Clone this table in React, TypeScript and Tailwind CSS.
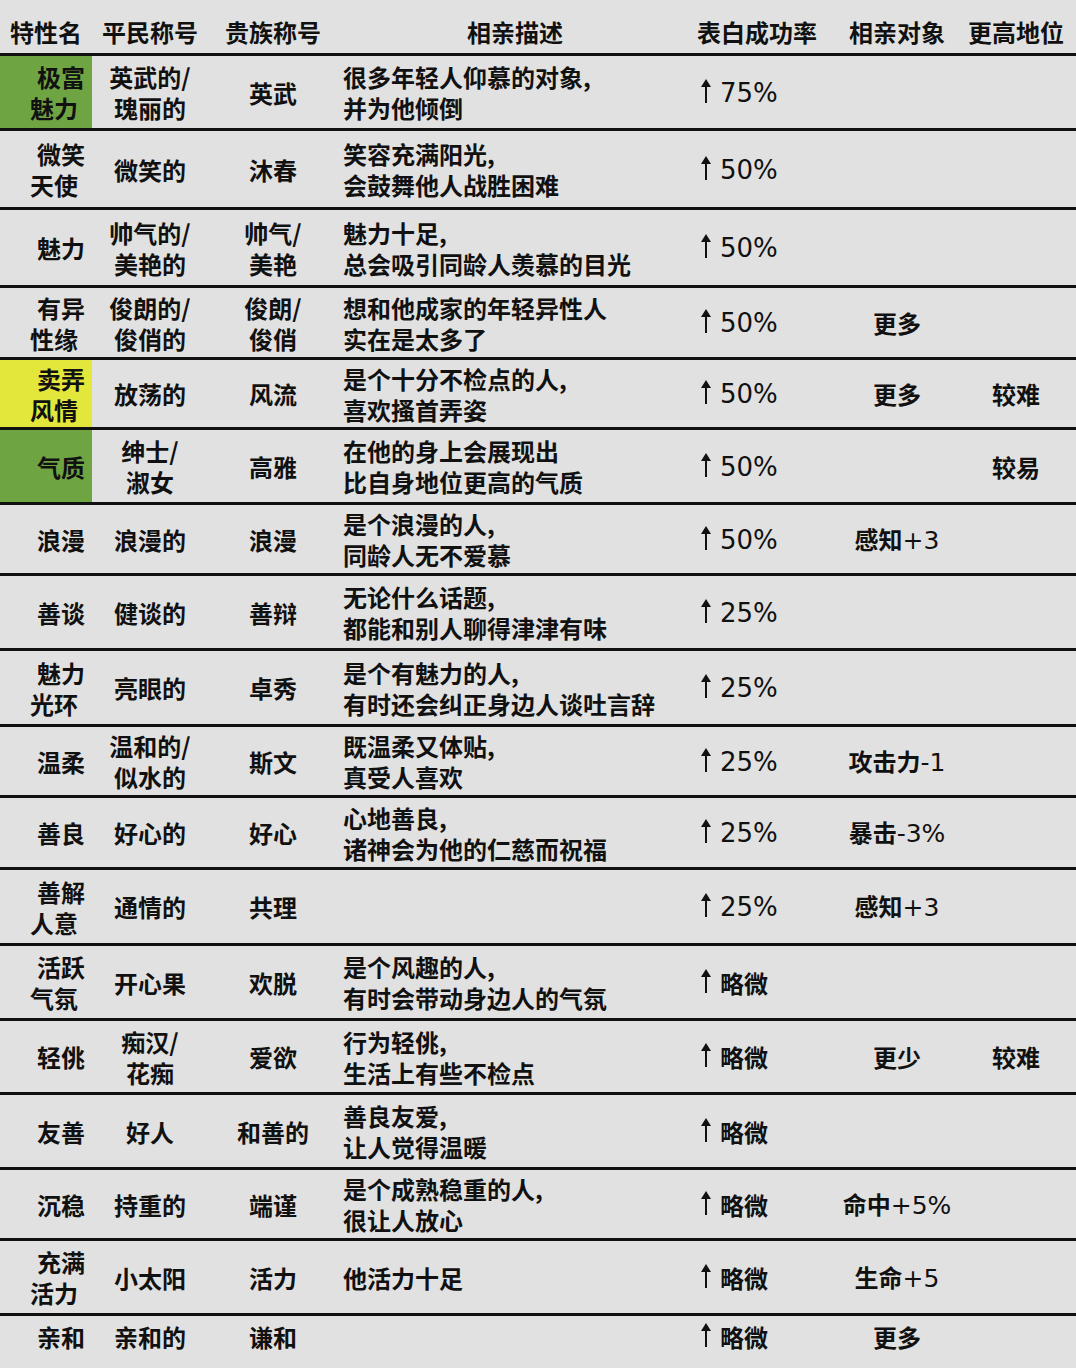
type Row = {
  name: string[];
  bg?: string;
  civ: string[];
  noble: string[];
  desc: string[];
  rate: string;
  target?: string;
  status?: string;
  h: string;
};

const rows: Row[] = [
  { name: ["极富", "魅力"], bg: "bg-[#6fa443]", civ: ["英武的/", "瑰丽的"], noble: ["英武"], desc: ["很多年轻人仰慕的对象,", "并为他倾倒"], rate: "75%", h: "h-[75px]" },
  { name: ["微笑", "天使"], civ: ["微笑的"], noble: ["沐春"], desc: ["笑容充满阳光,", "会鼓舞他人战胜困难"], rate: "50%", h: "h-[79px]" },
  { name: ["魅力"], civ: ["帅气的/", "美艳的"], noble: ["帅气/", "美艳"], desc: ["魅力十足,", "总会吸引同龄人羡慕的目光"], rate: "50%", h: "h-[78px]" },
  { name: ["有异", "性缘"], civ: ["俊朗的/", "俊俏的"], noble: ["俊朗/", "俊俏"], desc: ["想和他成家的年轻异性人", "实在是太多了"], rate: "50%", target: "更多", h: "h-[72px]" },
  { name: ["卖弄", "风情"], bg: "bg-[#e3e63b]", civ: ["放荡的"], noble: ["风流"], desc: ["是个十分不检点的人,", "喜欢搔首弄姿"], rate: "50%", target: "更多", status: "较难", h: "h-[70px]" },
  { name: ["气质"], bg: "bg-[#6fa443]", civ: ["绅士/", "淑女"], noble: ["高雅"], desc: ["在他的身上会展现出", "比自身地位更高的气质"], rate: "50%", status: "较易", h: "h-[75px]" },
  { name: ["浪漫"], civ: ["浪漫的"], noble: ["浪漫"], desc: ["是个浪漫的人,", "同龄人无不爱慕"], rate: "50%", target: "感知+3", h: "h-[71px]" },
  { name: ["善谈"], civ: ["健谈的"], noble: ["善辩"], desc: ["无论什么话题,", "都能和别人聊得津津有味"], rate: "25%", h: "h-[75px]" },
  { name: ["魅力", "光环"], civ: ["亮眼的"], noble: ["卓秀"], desc: ["是个有魅力的人,", "有时还会纠正身边人谈吐言辞"], rate: "25%", h: "h-[76px]" },
  { name: ["温柔"], civ: ["温和的/", "似水的"], noble: ["斯文"], desc: ["既温柔又体贴,", "真受人喜欢"], rate: "25%", target: "攻击力-1", h: "h-[71px]" },
  { name: ["善良"], civ: ["好心的"], noble: ["好心"], desc: ["心地善良,", "诸神会为他的仁慈而祝福"], rate: "25%", target: "暴击-3%", h: "h-[72px]" },
  { name: ["善解", "人意"], civ: ["通情的"], noble: ["共理"], desc: [], rate: "25%", target: "感知+3", h: "h-[76px]" },
  { name: ["活跃", "气氛"], civ: ["开心果"], noble: ["欢脱"], desc: ["是个风趣的人,", "有时会带动身边人的气氛"], rate: "略微", h: "h-[75px]" },
  { name: ["轻佻"], civ: ["痴汉/", "花痴"], noble: ["爱欲"], desc: ["行为轻佻,", "生活上有些不检点"], rate: "略微", target: "更少", status: "较难", h: "h-[74px]" },
  { name: ["友善"], civ: ["好人"], noble: ["和善的"], desc: ["善良友爱,", "让人觉得温暖"], rate: "略微", h: "h-[75px]" },
  { name: ["沉稳"], civ: ["持重的"], noble: ["端谨"], desc: ["是个成熟稳重的人,", "很让人放心"], rate: "略微", target: "命中+5%", h: "h-[71px]" },
  { name: ["充满", "活力"], civ: ["小太阳"], noble: ["活力"], desc: ["他活力十足"], rate: "略微", target: "生命+5", h: "h-[75px]" },
  { name: ["亲和"], civ: ["亲和的"], noble: ["谦和"], desc: [], rate: "略微", target: "更多", h: "h-[55px] pb-[12px]" },
];

const grid = "grid grid-cols-[92px_116px_130px_354px_130px_150px_88px]";
const latin = "font-['DejaVu_Sans',sans-serif] font-normal";

// digits and signs are set in a lighter, wider face than the CJK text
function Mixed({ text, size }: { text: string; size: string }) {
  const parts = text.split(/([0-9+\-%]+)/).filter(Boolean);
  return (
    <span className="whitespace-nowrap">
      {parts.map((p, i) =>
        /^[0-9+\-%]+$/.test(p) ? (
          <span key={i} className={`${latin} ${size}`}>
            {p}
          </span>
        ) : (
          <span key={i}>{p}</span>
        )
      )}
    </span>
  );
}

function UpArrow() {
  return (
    <svg width="12" height="24" viewBox="0 0 12 24" className="mr-[8px] mb-[3px] shrink-0" aria-hidden>
      <path d="M6 0 L11 8 L1 8 Z" fill="#111" />
      <rect x="5" y="6" width="2" height="18" fill="#111" />
    </svg>
  );
}

function Rate({ value }: { value: string }) {
  return (
    <span className="flex items-center whitespace-nowrap">
      <UpArrow />
      <Mixed text={value} size="text-[26px]" />
    </span>
  );
}

function Lines({ lines }: { lines: string[] }) {
  return (
    <div className="flex flex-col items-center">
      {lines.map((t) => (
        <div key={t} className="whitespace-nowrap">
          {t}
        </div>
      ))}
    </div>
  );
}

export default function App() {
  return (
    <div className="w-[1076px] h-[1368px] overflow-hidden bg-[#e1e1e1] text-[#111] font-['Noto_Sans_CJK_SC',sans-serif] font-bold text-[24px] leading-[31px]">
      <div className={`${grid} h-[53px] pt-[10px] items-center`}>
        <div className="flex justify-center">特性名</div>
        <div className="flex justify-center whitespace-nowrap">平民称号</div>
        <div className="flex justify-center whitespace-nowrap">贵族称号</div>
        <div className="flex justify-center">相亲描述</div>
        <div className="flex justify-center whitespace-nowrap">表白成功率</div>
        <div className="flex justify-center">相亲对象</div>
        <div className="flex justify-center whitespace-nowrap">更高地位</div>
      </div>

      {rows.map((r, idx) => (
        <div key={idx} className={`${grid} ${r.h} border-t-[3px] border-[#111]`}>
          <div className={`flex flex-col justify-center ${r.bg ?? ""}`}>
            {r.name.map((t, i) => (
              <div key={t} className={i === 0 ? "pl-[37px]" : "pl-[30px]"}>
                {t}
              </div>
            ))}
          </div>
          <div className="flex items-center justify-center">
            <Lines lines={r.civ} />
          </div>
          <div className="flex items-center justify-center">
            <Lines lines={r.noble} />
          </div>
          <div className="flex flex-col justify-center pl-[5px]">
            {r.desc.map((t) => (
              <div key={t} className="whitespace-nowrap">
                {t}
              </div>
            ))}
          </div>
          <div className="flex items-center pl-[8px]">
            <Rate value={r.rate} />
          </div>
          <div className="flex items-center justify-center">
            {r.target && <Mixed text={r.target} size="text-[25px]" />}
          </div>
          <div className="flex items-center justify-center">{r.status}</div>
        </div>
      ))}
    </div>
  );
}
